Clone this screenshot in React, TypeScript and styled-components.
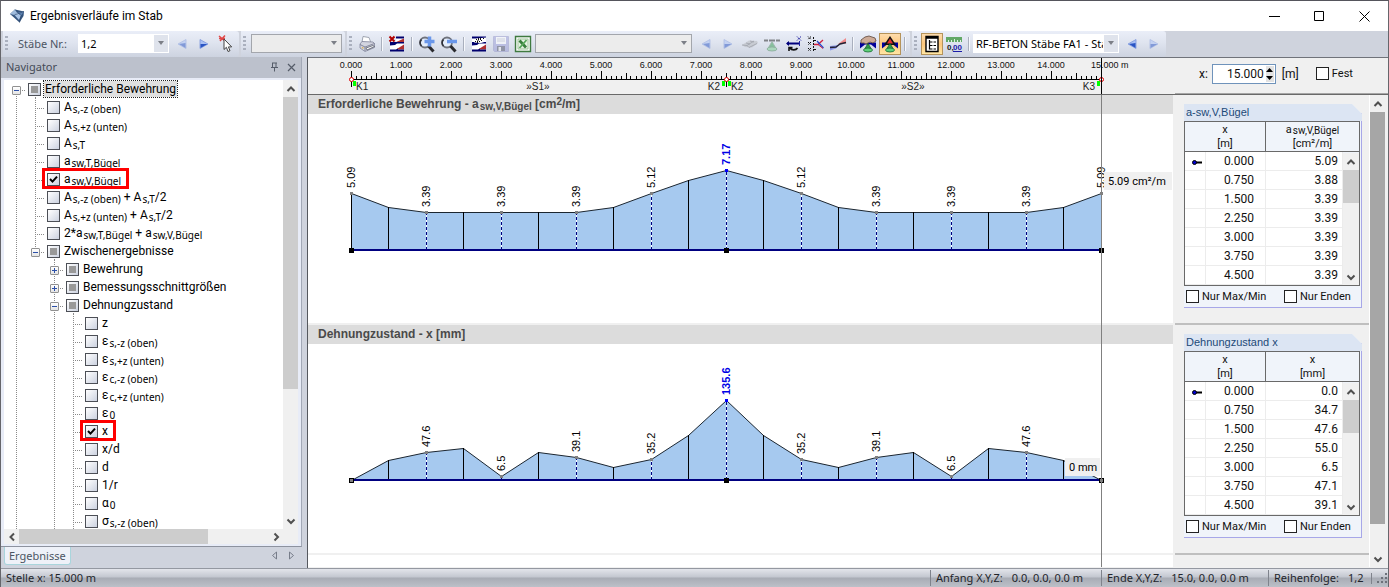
import React, { useLayoutEffect, useRef, useState } from "react";
import styled, { createGlobalStyle, css } from "styled-components";

const UI = `"Noto Sans", "Open Sans", sans-serif`;
const NARROW = `Roboto, "Noto Sans", sans-serif`;
const ARIAL = `"Liberation Sans", Arial, sans-serif`;

const tick =
  "url(\"data:image/svg+xml,%3Csvg xmlns='http://www.w3.org/2000/svg' width='11' height='11'%3E%3Cpath d='M2 5l2.5 2.6L9 2.6' fill='none' stroke='%23000' stroke-width='2'/%3E%3C/svg%3E\")";

const GlobalStyle = createGlobalStyle`
  *, *::before, *::after { box-sizing: border-box; }
  body { margin: 0; background: #f0f0f0; font: 11px/16px ${UI}; color: #111; }
  button, input, select { font: inherit; color: inherit; margin: 0; padding: 0; border: 0; border-radius: 0; background: none; }
  svg { display: block; flex: none; }
`;

/* ---------- window frame ---------- */

const Window = styled.div`
  display: flex;
  flex-direction: column;
  min-height: 100vh;
  border: 1px solid #66666b;
  border-top-color: #55555c;
  background: #cfd3dd;
`;

const TitleBar = styled.header`
  display: flex;
  align-items: center;
  height: 30px;
  padding: 0 1px 0 8px;
  background: #fff;
`;

const Title = styled.h1`
  flex: 1;
  margin: 0 0 0 5px;
  font: 400 12px/16px ${NARROW};
  color: #000;
`;

const CaptionButton = styled.button`
  display: flex;
  align-items: center;
  justify-content: center;
  width: 45px;
  height: 30px;
`;

/* ---------- toolbar ---------- */

const ToolBars = styled.div`
  display: flex;
  gap: 2px;
  height: 26px;
  padding-left: 2px;
  background: #cfd3dd;
`;

const ToolBar = styled.div<{ $end: number }>`
  display: flex;
  align-items: center;
  padding: 0 ${(p) => p.$end}px 1px 2px;
  border-radius: 0 3px 3px 0;
  background: linear-gradient(#eaeef8, #dfe4ef 45%, #cdd3e0);
`;

const Grip = styled.span`
  width: 3px;
  height: 15px;
  margin-right: 4px;
  background: repeating-linear-gradient(#aab0be 0 2px, transparent 2px 4px);
`;

const Separator = styled.span`
  width: 8px;
  height: 14px;
  background: linear-gradient(90deg, transparent 3px, #a9afbd 3px 4px, #f6f8fc 4px 5px, transparent 5px);
`;

const ToolButton = styled.button<{ $active?: boolean; $dim?: boolean }>`
  display: flex;
  align-items: center;
  justify-content: center;
  width: 22px;
  height: 22px;
  ${(p) =>
    p.$active &&
    css`
      border: 1px solid #b5935a;
      background: linear-gradient(#fddcae, #fdc77c 50%, #ffe6a4);
    `}
  svg {
    opacity: ${(p) => (p.$dim ? 0.5 : 1)};
  }
`;

const FieldLabel = styled.label`
  width: 66px;
  padding-left: 6px;
  white-space: nowrap;
  color: #4c5563;
`;

const ComboBox = styled.span<{ $w: number; $disabled?: boolean }>`
  position: relative;
  display: flex;
  width: ${(p) => p.$w}px;
  height: 19px;
  margin: ${(p) => (p.$disabled ? "0 3px 0 1px" : "0 2px 0 0")};
  border: 1px solid ${(p) => (p.$disabled ? "#a3a6ac" : "#fff")};
  background: ${(p) => (p.$disabled ? "#ececec" : "#fff")};
  &::after {
    content: "";
    position: absolute;
    inset: 0 0 0 auto;
    width: 14px;
    pointer-events: none;
    background: ${(p) => (p.$disabled ? "transparent" : "#dfe3ec")};
  }
  &::before {
    content: "";
    position: absolute;
    z-index: 1;
    right: 4px;
    top: 6px;
    border: 3px solid transparent;
    border-top: 4px solid #7c7f87;
    border-bottom: 0;
    pointer-events: none;
  }
`;

const Select = styled.select`
  flex: 1;
  min-width: 0;
  padding: 0 15px 0 2px;
  appearance: none;
  outline: 0;
  color: #000;
  opacity: 1;
`;

/* ---------- body ---------- */

const Body = styled.div`
  display: flex;
  flex: 1;
  gap: 5px;
`;

const Navigator = styled.aside`
  display: flex;
  flex-direction: column;
  width: 301px;
`;

const NavFrame = styled.div`
  display: flex;
  flex-direction: column;
  flex: 1;
  border-right: 1px solid #a2a8b6;
  border-bottom: 1px solid #8d929e;
  background: #e8ecf7;
`;

const NavHeader = styled.div`
  display: flex;
  align-items: center;
  height: 21px;
  padding: 0 1px 1px 5px;
  background: #bcc1cc;
  color: #444b57;
`;

const NavTitle = styled.h2`
  flex: 1;
  margin: 0;
  font-size: 11px;
  font-weight: 400;
`;

const PaneButton = styled.button`
  display: flex;
  align-items: center;
  justify-content: center;
  width: 17px;
  height: 17px;
`;

const NavContent = styled.div`
  display: grid;
  grid-template: 1fr 15px / 1fr 15px;
  flex: 1;
  margin: 2px 3px;
  background: #f0f0f0;
`;

const Tree = styled.ul`
  margin: 0;
  padding: 0 0 0 3px;
  list-style: none;
  background: #fff;
  color: #000;
`;

const TreeRow = styled.li`
  display: flex;
  height: 18px;
  &:last-child { height: 17px; overflow: hidden; }
`;

const dots = "repeating-linear-gradient(#8a8a8a 0 1px, transparent 1px 2px)";
const dotsX = "repeating-linear-gradient(90deg, #8a8a8a 0 1px, transparent 1px 2px)";

const Guide = styled.span<{ $line: "none" | "full" | "up" | "down"; $branch?: boolean }>`
  display: flex;
  align-items: center;
  justify-content: center;
  width: 19px;
  height: 18px;
  background:
    ${(p) => (p.$branch ? dotsX : "none")} 9px 10px / 10px 1px no-repeat,
    ${(p) => (p.$line === "none" ? "none" : dots)} 9px ${(p) => (p.$line === "down" ? "10px" : "0")} / 1px
      ${(p) => (p.$line === "full" ? "18px" : "9px")} no-repeat;
`;

const Expander = styled.button`
  width: 9px;
  height: 9px;
  margin: 2px 0 0;
  border: 1px solid #919191;
  border-radius: 1px;
  background: linear-gradient(#fff, #e4e4e4);
`;

const Node = styled.label<{ $marked?: boolean; $open?: boolean }>`
  position: relative;
  display: flex;
  align-items: center;
  gap: 3px;
  height: 18px;
  padding-left: 2px;
  white-space: nowrap;
  ${(p) =>
    p.$open &&
    css`
      background: ${dots} 9px 15px / 1px 3px no-repeat;
    `}
  ${(p) =>
    p.$marked &&
    css`
      &::after {
        content: "";
        position: absolute;
        inset: -2px -7px -1px -3px;
        border: 3px solid #f00;
      }
    `}
`;

const Check = styled.input<{ $mixed?: boolean; $plain?: boolean }>`
  flex: none;
  width: 13px;
  height: 13px;
  appearance: none;
  border: 1px solid ${(p) => (p.$plain ? "#222" : "#4c4f56")};
  background: ${(p) =>
    p.$mixed
      ? "linear-gradient(#999, #999) center / 7px 7px no-repeat, linear-gradient(135deg, #fff, #ccd2e0)"
      : p.$plain
        ? "#fff"
        : "linear-gradient(135deg, #fff, #ccd2e0)"};
  &:checked {
    background: ${tick} center no-repeat, linear-gradient(135deg, #fff, #ccd2e0);
  }
`;

const NodeText = styled.span<{ $focus?: boolean }>`
  height: 16px;
  padding: 0 1px;
  font: 12px/16px ${NARROW};
  ${(p) =>
    p.$focus &&
    css`
      background: #e0e0e0;
      outline: 1px dotted #222;
    `}
`;

const Sub = styled.span`
  margin-left: 1px;
  font-size: 10px;
  line-height: 1px;
  vertical-align: -2px;
`;

const TreeSub = styled(Sub)`
  font-family: ${UI};
`;

const HeadSub = styled(Sub)`
  vertical-align: -1px;
`;

const Sup = styled.span`
  font-size: 10px;
  line-height: 1px;
  vertical-align: 3px;
`;

const Scroll = styled.div<{ $row?: boolean }>`
  display: flex;
  flex-direction: ${(p) => (p.$row ? "row" : "column")};
  background: #f0f0f0;
`;

const ScrollButton = styled.button<{ $h?: number }>`
  display: flex;
  flex: none;
  align-items: center;
  justify-content: center;
  min-width: 15px;
  min-height: ${(p) => p.$h ?? 17}px;
`;

const Thumb = styled.div<{ $grow: number; $dark?: boolean }>`
  flex: ${(p) => p.$grow} 0 0;
  background: ${(p) => (p.$dark ? "#a6a6a6" : "#cdcdcd")};
`;

const Track = styled.div<{ $grow: number }>`
  flex: ${(p) => p.$grow} 0 0;
`;

const NavTabs = styled.div`
  display: flex;
  align-items: flex-start;
  height: 21px;
  padding: 0 2px 0 3px;
`;

const NavTab = styled.button`
  height: 18px;
  padding: 0 4px;
  border: 1px solid #a9d5dc;
  border-top: 0;
  border-radius: 0 0 3px 3px;
  background: #eef1f8;
  line-height: 16px;
  color: #4c5563;
`;

const Spacer = styled.span`
  flex: 1;
`;

/* ---------- result area ---------- */

const Main = styled.main`
  display: flex;
  flex-direction: column;
  flex: 1;
  min-width: 0;
  border-top: 1px solid #70737a;
  border-left: 1px solid #55585e;
  background: #f0f0f0;
`;

const RulerRow = styled.div`
  display: flex;
  height: 37px;
  border-bottom: 1px solid #696969;
`;

const Plot = styled.div`
  flex: 1;
  min-width: 0;
  overflow: hidden;
`;

const PositionBox = styled.div`
  display: flex;
  align-items: center;
  width: 213px;
  margin-left: 2px;
  padding: 0 0 4px 24px;
  border-bottom: 1px solid #a6a6a6;
  font: 12px/16px ${NARROW};
`;

const NumberField = styled.span`
  display: flex;
  width: 64px;
  height: 20px;
  margin: 0 6px 0 4px;
  border: 1px solid #6f93bb;
  background: #fff;
`;

const NumberInput = styled.input`
  flex: 1;
  min-width: 0;
  padding-right: 2px;
  outline: 0;
  text-align: right;
`;

const Spinner = styled.span`
  display: flex;
  flex-direction: column;
  width: 9px;
  padding: 1px 1px 1px 0;
`;

const SpinButton = styled.button`
  display: flex;
  flex: 1;
  align-items: center;
  justify-content: center;
  background: #e2e2e2;
`;

const Unit = styled.span`
  width: 34px;
`;

const CheckLabel = styled.label<{ $w?: number }>`
  display: flex;
  align-items: center;
  gap: 3px;
  width: ${(p) => (p.$w ? `${p.$w}px` : "auto")};
  font: 11px/16px ${NARROW};
  white-space: nowrap;
`;

const Results = styled.div`
  display: flex;
  flex: 1;
  padding-bottom: 1px;
`;

const Diagrams = styled.div`
  position: relative;
  display: flex;
  flex-direction: column;
  flex: 1;
  min-width: 0;
  background: #fff;
`;

const CursorLine = styled.div<{ $right: number }>`
  position: absolute;
  inset: 0 ${(p) => p.$right}px 0 auto;
  width: 1px;
  background: #808080;
`;

const Diagram = styled.section`
  height: 230px;
  border-bottom: 2px solid #f0f0f0;
`;

const DiagramTitle = styled.h3`
  height: 19px;
  margin: 0;
  padding-left: 10px;
  background: #dcdcdc;
  font: bold 12px/19px ${ARIAL};
  color: #4a4a4a;
`;

const Panels = styled.div`
  width: 197px;
  padding-left: 2px;
  border-right: 1px solid #fff;
`;

const PanelSlot = styled.section`
  height: 230px;
  padding: 9px 7px 0 9px;
  border-bottom: 2px solid #bfbfbf;
`;

const Card = styled.div`
  display: flex;
  flex-direction: column;
  height: 204px;
  border-right: 1px solid #a7a7e8;
  border-bottom: 1px solid #a7a7e8;
  background: #f0f4fa;
  clip-path: polygon(0 0, 168px 0, 100% 10px, 100% 100%, 0 100%);
`;

const CardTitle = styled.h4`
  height: 17px;
  margin: 0 -1px 0 0;
  padding-left: 2px;
  background: #dce5f3;
  font: 11px/17px ${ARIAL};
  color: #1d4a78;
`;

const TableFrame = styled.div`
  position: relative;
  width: 176px;
  height: 165px;
  border: 1px solid #696969;
`;

const Table = styled.table`
  width: 100%;
  border-collapse: separate;
  border-spacing: 0;
  table-layout: fixed;
`;

const HeadCell = styled.th<{ $first?: boolean }>`
  height: 30px;
  padding: 0;
  border-bottom: 1px solid #696969;
  border-right: ${(p) => (p.$first ? "1px solid #696969" : "0")};
  font: 400 11px/14px ${NARROW};
`;

const Cell = styled.td<{ $pad?: number }>`
  height: 19px;
  padding: 0 ${(p) => p.$pad ?? 0}px 0 0;
  border-right: 1px solid #ececec;
  border-bottom: 1px solid #ececec;
  background: #fff;
  text-align: right;
  font: 12px/18px ${NARROW};
  svg { margin: 2px 0 0 6px; }
`;

const TableScroll = styled(Scroll)`
  position: absolute;
  top: 31px;
  right: 0;
  bottom: 0;
  width: 16px;
`;

const CardChecks = styled.div`
  display: flex;
  flex: 1;
  align-items: center;
  padding-left: 2px;
`;

const PageScroll = styled(Scroll)`
  width: 15px;
  margin-right: 3px;
`;

/* ---------- status bar ---------- */

const StatusBar = styled.footer`
  display: flex;
  align-items: center;
  height: 19px;
  border-top: 1px solid #9498a1;
  background: linear-gradient(#e3e5eb, #c3c7d0 8px, #a8acb5 9px, #bcc0c8);
  color: #22252b;
`;

const StatusCell = styled.span<{ $w?: number }>`
  display: flex;
  gap: 9px;
  flex: ${(p) => (p.$w ? "none" : 1)};
  width: ${(p) => (p.$w ? `${p.$w}px` : "auto")};
  padding-left: 5px;
  white-space: nowrap;
  & + & {
    border-left: 1px solid #7f838c;
  }
`;

/* ---------- icons ---------- */

const ic = { width: 18, height: 18, viewBox: "0 0 18 18" };

const LogoIcon = () => (
  <svg width="16" height="16" viewBox="0 0 16 16">
    <path d="M1 6L6 1.5 15 3.5 14.5 8 10.5 14.5z" fill="#35557f" />
    <path d="M1 6L6 1.5 8 4.5 5.5 7z" fill="#9fbbdc" />
    <path d="M8 4.5L15 3.5 12 7.5z" fill="#5f84b4" />
    <path d="M5.500 7L8 4.500 12 7.500 10 12z" fill="#a9c4e6" />
    <path d="M6 1.500L12 7.500 10.500 14.500M15 3.500L5.500 7" stroke="#2b4468" strokeWidth=".6" fill="none" />
  </svg>
);

const Tri = ({ left }: { left?: boolean }) => (
  <svg width="12" height="12" viewBox="0 0 12 12">
    <path
      d={left ? "M10 1.500v9L2 6z" : "M2 1.500v9L10 6z"}
      fill="#a9c0f4"
      stroke="#7d98dc"
      strokeWidth=".8"
    />
    <path d={left ? "M9.500 5v5L3 6z" : "M2.500 6v4L9.500 6z"} fill="#2a55c4" />
  </svg>
);

const PickIcon = () => (
  <svg {...ic}>
    <path d="M2 1l6 5M8 .5L3 6M2 3.500h6" stroke="#e04848" strokeWidth="1.500" fill="none" />
    <path d="M7 4v10.500l2.400-2.200L11 16.500l2-.8-1.600-3.800h3.300z" fill="#fff" stroke="#444" />
  </svg>
);

const PrintIcon = () => (
  <svg {...ic}>
    <path d="M4 7L5 1.500l6 1L13 8z" fill="#fff" stroke="#8c92a0" strokeWidth=".8" />
    <path d="M2 9l2-2.500L15 7l1.500 1.500v4L7 16.500 2 13z" fill="#d3d5e0" stroke="#80849a" strokeWidth=".8" />
    <path d="M2 9.500L7 12l9.500-3.500M7 12v4" stroke="#70748a" strokeWidth=".8" fill="none" />
    <path d="M8 13l7-2.500 1.500 1L9 15z" fill="#fff" stroke="#565a68" strokeWidth=".8" />
    <path d="M4 12.500l1.500.8" stroke="#e0b040" strokeWidth="1.300" />
  </svg>
);

const Layers = ({ hatch, cross }: { hatch?: boolean; cross?: boolean }) => (
  <>
    <path d="M2 2h14v14H2z" fill="#fff" />
    <path d="M2 1.500h14v2H2z" fill="#00006e" />
    <path d="M16 3.500v4H7z" fill={hatch ? "#fff" : "#b03030"} />
    <path d="M2 7h14v1.500H9l-2 1.500-5 .5z" fill="#00006e" />
    <path d="M16 9.500v5H8z" fill="#b03030" />
    <path d="M2 14.500h6l2-1v1h6v2H2z" fill="#00006e" />
    {hatch && (
      <>
        <path d="M4 7.500l3-4 9-1v4l-5 1.500z" fill="#fff" />
        <path d="M5 6.500h3M9 6.500h2M6 4.500h3M10 4.500h2M7.500 5.500h2M11 5.500h2M8 3.500h3M13 3.500h2M7 7.500h2" stroke="#111" strokeDasharray="1 1" />
      </>
    )}
    {cross && (
      <>
        <path d="M0 0h8v7H0z" fill="#e3e7f1" />
        <path d="M1.500 1.500l5 5M6.500 1.500l-5 5" stroke="#b00000" strokeWidth="2" />
      </>
    )}
  </>
);

const ZoomIcon = ({ plus }: { plus?: boolean }) => (
  <svg {...ic}>
    <circle cx="7" cy="7.500" r="5" fill="#e4edfb" stroke="#70747e" strokeWidth="1.800" />
    <path d="M3.500 4.500a5 5 0 0 0 0 6.500" stroke="#2e3038" strokeWidth="1.500" fill="none" />
    <path d="M10.500 11l5 5.500" stroke="#2a2a2e" strokeWidth="3" />
    <path d={plus ? "M6.500 6.500h10M11.500 1.500v10" : "M7 6.500h10"} stroke="#6a97ea" strokeWidth="3.500" />
  </svg>
);

const SaveIcon = () => (
  <svg {...ic}>
    <path d="M1.500 1.500h15v15h-14l-1-1z" fill="#9a9dd8" stroke="#9496c8" />
    <path d="M4 2h10v7H4z" fill="#fff" />
    <path d="M5 4h8M5 6h8" stroke="#b7bac8" />
    <path d="M5 11h8v5H5z" fill="#4b4e66" />
    <path d="M6.500 12h2.500v4H6.500z" fill="#eee" />
  </svg>
);

const ExcelIcon = () => (
  <svg {...ic}>
    <path d="M1.500 1.500h15v15h-15z" fill="#f6faf5" stroke="#3f7a40" strokeWidth="1.400" />
    <path d="M4 4h10v10H4z" fill="#e6f2e4" stroke="#8fbb8c" strokeWidth=".8" />
    <path d="M5.500 5.500l6.500 7" stroke="#3a7f3e" strokeWidth="2.800" />
    <path d="M12.500 5l-7 8" stroke="#57a85a" strokeWidth="1.800" />
  </svg>
);

const MemberIcon = () => (
  <svg {...ic}>
    <path d="M1 10l7-4.500 8 .5 1 2-6 4.500-7-.5z" fill="#b4b6ba" />
    <path d="M1 10l5 .5L13 6M6 10.500l2 2 8-4M5 8l4 1M9 6l4 1" stroke="#63666c" strokeWidth=".8" fill="none" />
  </svg>
);

const SupportIcon = () => (
  <svg {...ic}>
    <path d="M1 5.500h4M13 5.500h4M6 5.500h6" stroke="#222" strokeWidth="2" />
    <path d="M9 6.500l3.500 6h-7z" fill="#33a050" stroke="#5e8a6b" strokeWidth=".8" />
    <ellipse cx="9" cy="14" rx="5" ry="2" fill="#7ed392" stroke="#3f7a4e" strokeWidth=".8" />
  </svg>
);

const DimensionIcon = () => (
  <svg {...ic}>
    <path d="M2 8.500h13" stroke="#00007c" strokeWidth="2" />
    <path d="M1 8.500l3-2.500v5z" fill="#00007c" />
    <path d="M12 1.500l4 4M16 1.500l-4 4" stroke="#2222a0" strokeDasharray="1.500 .6" />
    <path d="M14.500 6v5" stroke="#2222a0" />
    <path d="M5 13c1.500 2.500 6 2.500 7.500 0M4 16v-3.500h3.500" stroke="#111" strokeWidth="1.600" fill="none" />
  </svg>
);

const DivisionIcon = () => (
  <svg {...ic}>
    <path d="M1 1.500l3 3M4 1.500l-3 3M1 7l3 3M4 7l-3 3M1 13l3 3M4 13l-3 3" stroke="#111" strokeDasharray="1.500 .7" />
    <path d="M6.500 2v15M7 5.500h3M7 14.500h3" stroke="#111" strokeDasharray="2 1" />
    <path d="M7 9.500h4l5-4.500" stroke="#d02040" fill="none" strokeWidth="1.300" />
    <path d="M10 6l6.500 7" stroke="#2244cc" fill="none" strokeWidth="1.200" />
    <path d="M11 9.500l5 4" stroke="#d02040" fill="none" />
  </svg>
);

const SlopeIcon = () => (
  <svg {...ic}>
    <path d="M1 15.500V11l9-1-3 3.500z" fill="#8a96ea" />
    <path d="M9 9l8-6v5.500z" fill="#f08a8a" />
    <path d="M1 12.500l6-.500 4-3 6-1.500" stroke="#223" strokeWidth="1.400" fill="none" />
  </svg>
);

const MaxIcon = ({ hand }: { hand?: boolean }) => (
  <svg {...ic}>
    <path d="M1 7.500h16v6l-5-4H6l-5 4z" fill="#00009a" />
    {hand ? (
      <path d="M2 8V5l4-3 4-1 6 2 1 3-3 2-3-1-4 2-2-1z" fill="#cdab98" stroke="#6a5448" strokeWidth=".9" />
    ) : (
      <>
        <path d="M9 1L3 10h12z" fill="#111" />
        <path d="M9 3.500L6 8.500h6z" fill="#e83030" />
      </>
    )}
    <path d="M9 8.500l3 5H6z" fill="#2da04c" stroke="#1a5a2c" strokeWidth=".8" />
    <ellipse cx="9" cy="15" rx="4.500" ry="2" fill="#5fd07a" stroke="#1c6b33" strokeWidth=".8" />
  </svg>
);

const TreeIcon = () => (
  <svg {...ic}>
    <path d="M3 1.500h12v15H3z" fill="#fff" stroke="#000" strokeWidth="1.400" />
    <path d="M3 2.500h12" stroke="#000" strokeWidth="2.500" />
    <path d="M6.500 5v9.500M6.500 7h3M6.500 10.500h3M6.500 14h3M10.500 7h2.500M10.500 10.500h2.500M10.500 14h2.500" stroke="#000" strokeWidth="1.200" />
  </svg>
);

const DecimalIcon = () => (
  <svg {...ic}>
    <path d="M1 2h16v5H1z" fill="#62a866" />
    <path d="M3.500 7V5M6.500 7V5M9.500 7V4M12.500 7V5M15.500 7V5" stroke="#dff2e0" />
    <text x="2" y="15" fontSize="8" fontWeight="700" fontFamily="Liberation Sans" fill="#222">0,</text>
    <text x="8" y="15" fontSize="8" fontWeight="700" fontFamily="Liberation Sans" fill="#1c1ca8">00</text>
    <path d="M8 16.500h9" stroke="#1c1ca8" />
  </svg>
);

const Chevron = ({ dir }: { dir: "up" | "down" | "left" | "right" }) => {
  const d = {
    up: "M1.500 7L5 3.500 8.500 7",
    down: "M1.500 3.500L5 7 8.500 3.500",
    left: "M7 1.500L3.500 5 7 8.500",
    right: "M3.500 1.500L7 5 3.500 8.500",
  }[dir];
  return (
    <svg width="10" height="10" viewBox="0 0 10 10">
      <path d={d} fill="none" stroke="#505050" strokeWidth="2" />
    </svg>
  );
};

/* ---------- navigator data ---------- */

type Item = {
  label: React.ReactNode;
  level: number;
  kind?: "mixed" | "checked";
  fold?: "+" | "-";
  marked?: boolean;
  focus?: boolean;
};

const q = (base: string, sub: string) => (
  <>
    {base}
    <TreeSub>{sub}</TreeSub>
  </>
);

const items: Item[] = [
  { level: 0, label: "Erforderliche Bewehrung", kind: "mixed", fold: "-", focus: true },
  { level: 1, label: q("A", "s,-z (oben)") },
  { level: 1, label: q("A", "s,+z (unten)") },
  { level: 1, label: q("A", "s,T") },
  { level: 1, label: q("a", "sw,T,Bügel") },
  { level: 1, label: q("a", "sw,V,Bügel"), kind: "checked", marked: true },
  { level: 1, label: <>{q("A", "s,-z (oben)")} + {q("A", "s,T")}/2</> },
  { level: 1, label: <>{q("A", "s,+z (unten)")} + {q("A", "s,T")}/2</> },
  { level: 1, label: <>{q("2*a", "sw,T,Bügel")} + {q("a", "sw,V,Bügel")}</> },
  { level: 1, label: "Zwischenergebnisse", kind: "mixed", fold: "-" },
  { level: 2, label: "Bewehrung", kind: "mixed", fold: "+" },
  { level: 2, label: "Bemessungsschnittgrößen", kind: "mixed", fold: "+" },
  { level: 2, label: "Dehnungzustand", kind: "mixed", fold: "-" },
  { level: 3, label: "z" },
  { level: 3, label: q("ε", "s,-z (oben)") },
  { level: 3, label: q("ε", "s,+z (unten)") },
  { level: 3, label: q("ε", "c,-z (oben)") },
  { level: 3, label: q("ε", "c,+z (unten)") },
  { level: 3, label: q("ε", "0") },
  { level: 3, label: "x", kind: "checked", marked: true },
  { level: 3, label: "x/d" },
  { level: 3, label: "d" },
  { level: 3, label: "1/r" },
  { level: 3, label: q("α", "0") },
  { level: 3, label: q("σ", "s,-z (oben)") },
];

const guideLine = (item: Item, cell: number) => {
  if (item.level === 0) return "down" as const;
  if (cell === 1 && item.level > 1) return "none" as const;
  if (cell === 1 && item.fold) return "up" as const;
  return "full" as const;
};

const TreeItem = ({ item }: { item: Item }) => (
  <TreeRow>
    {Array.from({ length: item.level + 1 }, (_, cell) => {
      const own = cell === item.level;
      return (
        <Guide key={cell} $line={guideLine(item, cell)} $branch={own}>
          {own && item.fold && (
            <Expander aria-label={item.fold === "+" ? "Aufklappen" : "Zuklappen"}>
              <svg width="7" height="7" viewBox="0 0 7 7">
                <path d={item.fold === "+" ? "M1 3.500h5M3.500 1v5" : "M1 3.500h5"} stroke="#2b4fa8" />
              </svg>
            </Expander>
          )}
        </Guide>
      );
    })}
    <Node $marked={item.marked} $open={item.fold === "-"}>
      <Check type="checkbox" defaultChecked={item.kind === "checked"} $mixed={item.kind === "mixed"} />
      <NodeText $focus={item.focus}>{item.label}</NodeText>
    </Node>
  </TreeRow>
);

/* ---------- diagrams ---------- */

const LEFT = 43;
const RIGHT = 72;
const LENGTH = 15;

function useWidth() {
  const ref = useRef<HTMLDivElement>(null);
  const [width, setWidth] = useState(865);
  useLayoutEffect(() => {
    const el = ref.current;
    if (!el) return;
    const update = () => setWidth(Math.max(200, el.clientWidth));
    update();
    const observer = new ResizeObserver(update);
    observer.observe(el);
    return () => observer.disconnect();
  }, []);
  const at = (m: number) => Math.floor(LEFT + (m / LENGTH) * (width - LEFT - RIGHT));
  return { ref, width, at };
}

const Ruler = () => {
  const { ref, width, at } = useWidth();
  const scale = { fontFamily: "Liberation Sans", fontSize: 9, fill: "#111" };
  const text = { fontFamily: "Liberation Sans", fontSize: 10, fill: "#222" };
  const nodes = [0, 7.5, 15];
  return (
    <Plot ref={ref}>
      <svg width={width} height="36">
        {Array.from({ length: 151 }, (_, i) => {
          const h = i % 10 === 0 ? 8 : i % 5 === 0 ? 6 : 3;
          return <rect key={i} x={at(i / 10)} y={21 - h} width="1" height={h} fill="#000" />;
        })}
        <rect x={at(0)} y="21" width={at(15) - at(0)} height="1" fill="#000" />
        {Array.from({ length: 15 }, (_, i) => (
          <text key={i} x={at(i)} y="10" textAnchor="middle" {...scale}>
            {i}.000
          </text>
        ))}
        <text x={at(15) - 10} y="10" {...scale}>15.000 m</text>
        {nodes.map((n) => (
          <g key={n}>
            {n > 0 && <rect x={at(n) - 4} y="23" width="3" height="5" fill="#0f0" />}
            {n < 15 && <rect x={at(n) + 2} y="23" width="3" height="5" fill="#0f0" />}
            <rect x={at(n)} y="23" width="1" height="6" fill="#000" />
            <circle cx={at(n) + 0.5} cy="21.500" r="2" fill="#fff" stroke="#e00000" />
          </g>
        ))}
        <rect x={at(15)} y="0" width="1" height="36" fill="#000" />
        <text x={at(0) + 5} y="32" {...text}>K1</text>
        <text x={at(7.5) - 6} y="32" textAnchor="end" {...text}>K2</text>
        <text x={at(7.5) + 5} y="32" {...text}>K2</text>
        <text x={at(15) - 6} y="32" textAnchor="end" {...text}>K3</text>
        <text x={at(3.75)} y="32" textAnchor="middle" {...text}>»S1»</text>
        <text x={at(11.25)} y="32" textAnchor="middle" {...text}>»S2»</text>
      </svg>
    </Plot>
  );
};

type Series = {
  half: number[];
  digits: number;
  endFill: string;
  tip: React.ReactNode;
  tipBox: { dx: number; y: number; w: number };
};

const BASE = 136;
const PEAK = 80;

const Curve = ({ series }: { series: Series }) => {
  const { ref, width, at } = useWidth();
  const values = [...series.half, ...series.half.slice(0, -1).reverse()];
  const max = Math.max(...values);
  const pts = values.map((v, i) => ({ v, x: at(i * 0.75), y: Math.round(BASE - (v / max) * PEAK) }));
  const outline = pts.map((p) => `${p.x + 0.5},${p.y + 0.5}`).join(" ");
  const start = at(0);
  const end = at(15);
  const { tipBox } = series;
  return (
    <Plot ref={ref}>
      <svg width={width} height="209">
        <polygon points={`${start},${BASE} ${outline} ${end},${BASE}`} fill="#a6c9ef" />
        <polyline points={outline} fill="none" stroke="#1c2630" strokeWidth="1" />
        {pts.map((p, i) =>
          i % 2 || i === 0 ? (
            <rect key={i} x={p.x} y={p.y} width="1" height={BASE - p.y} fill="#000" />
          ) : (
            <g key={i}>
              <rect x={p.x} y={p.y} width="1" height={BASE - p.y} fill="#fff" />
              <path d={`M${p.x + 0.5} ${BASE}V${p.y}`} stroke="#00007f" strokeDasharray="3 2" />
            </g>
          ),
        )}
        <rect x={start} y={BASE - 1} width={end - start} height="2" fill="#000080" />
        {pts.map((p, i) => {
          if (i % 2 || p.v === 0) return null;
          const peak = p.v === max;
          return (
            <g key={i}>
              <rect x={p.x - 1} y={p.y - 1} width="3" height="3" fill={peak ? "#0000ff" : "#808080"} />
              <text
                transform={`translate(${p.x + 4} ${p.y - 5}) rotate(-90)`}
                fontFamily="Liberation Sans"
                fontSize="11"
                fontWeight={peak ? 700 : 400}
                fill={peak ? "#0000e6" : "#000"}
              >
                {p.v.toFixed(series.digits)}
              </text>
            </g>
          );
        })}
        {[start, at(7.5), end].map((x, i) => (
          <rect key={i} x={x - 1.5} y={BASE - 1.5} width="4" height="4" fill={i === 1 ? "#000" : series.endFill} stroke="#000" />
        ))}
        <rect x={end + tipBox.dx} y={tipBox.y} width={tipBox.w} height="18" fill="#f0f0f0" />
        <text x={end + tipBox.dx + 4} y={tipBox.y + 13} fontFamily="Roboto" fontSize="11" fill="#000">
          {series.tip}
        </text>
      </svg>
    </Plot>
  );
};

const asw: Series = {
  half: [5.09, 3.88, 3.39, 3.39, 3.39, 3.39, 3.39, 3.88, 5.12, 6.25, 7.17],
  digits: 2,
  endFill: "#000",
  tip: "5.09 cm²/m",
  tipBox: { dx: 3, y: 58, w: 68 },
};

const depth: Series = {
  half: [0, 34.7, 47.6, 55.0, 6.5, 47.1, 39.1, 22, 35.2, 76, 135.6],
  digits: 1,
  endFill: "#808080",
  tip: "0 mm",
  tipBox: { dx: -36, y: 114, w: 35 },
};

/* ---------- value tables ---------- */

const PointerIcon = () => (
  <svg width="12" height="7" viewBox="0 0 12 7">
    <path d="M4 3.500h7" stroke="#000" strokeWidth="2" />
    <circle cx="3.500" cy="3.500" r="2" fill="#0000d0" stroke="#000" />
  </svg>
);

const ValueCard = ({ title, head, unit, values, id }: {
  title: string;
  head: React.ReactNode;
  unit: React.ReactNode;
  values: string[];
  id: string;
}) => (
  <PanelSlot>
    <Card>
      <CardTitle>{title}</CardTitle>
      <TableFrame>
        <Table>
          <colgroup>
            <col width="21" />
            <col width="60" />
            <col width="77" />
            <col width="16" />
          </colgroup>
          <thead>
            <tr>
              <HeadCell $first colSpan={2}>x<br />[m]</HeadCell>
              <HeadCell colSpan={2}>{head}<br />{unit}</HeadCell>
            </tr>
          </thead>
          <tbody>
            {values.map((v, i) => (
              <tr key={i}>
                <Cell>{i === 0 && <PointerIcon />}</Cell>
                <Cell $pad={11}>{(i * 0.75).toFixed(3)}</Cell>
                <Cell $pad={4}>{v}</Cell>
              </tr>
            ))}
          </tbody>
        </Table>
        <TableScroll>
          <ScrollButton aria-label="Nach oben"><Chevron dir="up" /></ScrollButton>
          <Thumb $grow={33} />
          <Track $grow={66} />
          <ScrollButton aria-label="Nach unten"><Chevron dir="down" /></ScrollButton>
        </TableScroll>
      </TableFrame>
      <CardChecks>
        <CheckLabel $w={98}><Check $plain type="checkbox" name={`${id}-max`} />Nur Max/Min</CheckLabel>
        <CheckLabel><Check $plain type="checkbox" name={`${id}-ends`} />Nur Enden</CheckLabel>
      </CardChecks>
    </Card>
  </PanelSlot>
);

const Combo = ({ w, value, label, id, disabled }: { w: number; value?: string; label: string; id?: string; disabled?: boolean }) => (
  <ComboBox $w={w} $disabled={disabled}>
    <Select id={id} aria-label={label} disabled={disabled}>
      <option>{value ?? ""}</option>
    </Select>
  </ComboBox>
);

export default function App() {
  return (
    <>
      <GlobalStyle />
      <Window>
        <TitleBar>
          <LogoIcon />
          <Title>Ergebnisverläufe im Stab</Title>
          <CaptionButton aria-label="Minimieren">
            <svg width="11" height="11"><path d="M0 5.500h11" stroke="#000" /></svg>
          </CaptionButton>
          <CaptionButton aria-label="Maximieren">
            <svg width="11" height="11"><path d="M.5.500h9v9h-9z" fill="none" stroke="#000" /></svg>
          </CaptionButton>
          <CaptionButton aria-label="Schließen">
            <svg width="11" height="11"><path d="M.5.500l10 10M10.500.500l-10 10" stroke="#000" /></svg>
          </CaptionButton>
        </TitleBar>

        <ToolBars>
          <ToolBar $end={2}>
            <Grip />
            <FieldLabel htmlFor="member">Stäbe Nr.:</FieldLabel>
            <Combo id="member" w={91} value="1,2" label="Stäbe Nr." />
            <ToolButton $dim aria-label="Voriger Stab"><Tri left /></ToolButton>
            <ToolButton aria-label="Nächster Stab"><Tri /></ToolButton>
            <ToolButton aria-label="Stab wählen"><PickIcon /></ToolButton>
          </ToolBar>
          <ToolBar $end={0}>
            <Grip />
            <Combo w={91} label="Lastfall" disabled />
          </ToolBar>
          <ToolBar $end={1}>
            <Grip />
            <ToolButton aria-label="Drucken"><PrintIcon /></ToolButton>
            <Separator />
            <ToolButton aria-label="Verläufe löschen"><svg {...ic}><Layers cross /></svg></ToolButton>
            <Separator />
            <ToolButton aria-label="Vergrößern"><ZoomIcon plus /></ToolButton>
            <ToolButton aria-label="Verkleinern"><ZoomIcon /></ToolButton>
            <Separator />
            <ToolButton aria-label="Füllung"><svg {...ic}><Layers hatch /></svg></ToolButton>
            <ToolButton $dim aria-label="Speichern"><SaveIcon /></ToolButton>
            <ToolButton aria-label="Excel"><ExcelIcon /></ToolButton>
            <Combo w={157} label="Darstellung" disabled />
            <ToolButton $dim aria-label="Zurück"><Tri left /></ToolButton>
            <ToolButton $dim aria-label="Vor"><Tri /></ToolButton>
            <ToolButton $dim aria-label="Stäbe"><MemberIcon /></ToolButton>
            <ToolButton $dim aria-label="Lager"><SupportIcon /></ToolButton>
            <ToolButton aria-label="Bemaßung"><DimensionIcon /></ToolButton>
            <ToolButton aria-label="Teilung"><DivisionIcon /></ToolButton>
            <ToolButton aria-label="Verlauf glätten"><SlopeIcon /></ToolButton>
            <Separator />
            <ToolButton aria-label="Manuell"><MaxIcon hand /></ToolButton>
            <ToolButton $active aria-label="Extremwerte"><MaxIcon /></ToolButton>
            <Separator />
          </ToolBar>
          <ToolBar $end={1}>
            <Grip />
            <ToolButton $active aria-label="Navigator"><TreeIcon /></ToolButton>
            <ToolButton aria-label="Dezimalstellen"><DecimalIcon /></ToolButton>
            <Separator />
            <Combo w={146} value="RF-BETON Stäbe FA1 - Stahlbeton" label="Bemessungsfall" />
            <ToolButton aria-label="Voriger Fall"><Tri left /></ToolButton>
            <ToolButton $dim aria-label="Nächster Fall"><Tri /></ToolButton>
          </ToolBar>
        </ToolBars>

        <Body>
          <Navigator>
            <NavFrame>
              <NavHeader>
                <NavTitle>Navigator</NavTitle>
                <PaneButton aria-label="Anheften">
                  <svg width="9" height="10"><path d="M2.500 1v4.500M6 1v4.500M2 1h5M1 5.500h7M4.500 6v3.500" stroke="#555c69" fill="none" /></svg>
                </PaneButton>
                <PaneButton aria-label="Schließen">
                  <svg width="9" height="9"><path d="M1 1l7 7M8 1L1 8" stroke="#555c69" strokeWidth="1.200" /></svg>
                </PaneButton>
              </NavHeader>
              <NavContent>
                <Tree>
                  {items.map((item, i) => (
                    <TreeItem key={i} item={item} />
                  ))}
                </Tree>
                <Scroll>
                  <ScrollButton aria-label="Nach oben"><Chevron dir="up" /></ScrollButton>
                  <Thumb $grow={292} />
                  <Track $grow={123} />
                  <ScrollButton aria-label="Nach unten"><Chevron dir="down" /></ScrollButton>
                </Scroll>
                <Scroll $row>
                  <ScrollButton $h={15} aria-label="Nach links"><Chevron dir="left" /></ScrollButton>
                  <Thumb $grow={187} />
                  <Track $grow={59} />
                  <ScrollButton $h={15} aria-label="Nach rechts"><Chevron dir="right" /></ScrollButton>
                </Scroll>
              </NavContent>
            </NavFrame>
            <NavTabs>
              <NavTab>Ergebnisse</NavTab>
              <Spacer />
              <PaneButton aria-label="Vorige Registerkarte">
                <svg width="7" height="9"><path d="M5.500 1v7L1.500 4.500z" fill="none" stroke="#777d8a" /></svg>
              </PaneButton>
              <PaneButton aria-label="Nächste Registerkarte">
                <svg width="7" height="9"><path d="M1.500 1v7l4-3.500z" fill="none" stroke="#777d8a" /></svg>
              </PaneButton>
            </NavTabs>
          </Navigator>

          <Main>
            <RulerRow>
              <Ruler />
              <PositionBox>
                <label htmlFor="position">x:</label>
                <NumberField>
                  <NumberInput id="position" defaultValue="15.000" />
                  <Spinner>
                    <SpinButton aria-label="Mehr"><svg width="7" height="4"><path d="M0 4L3.500 0 7 4z" /></svg></SpinButton>
                    <SpinButton aria-label="Weniger"><svg width="7" height="4"><path d="M0 0L3.500 4 7 0z" /></svg></SpinButton>
                  </Spinner>
                </NumberField>
                <Unit>[m]</Unit>
                <CheckLabel><Check $plain type="checkbox" />Fest</CheckLabel>
              </PositionBox>
            </RulerRow>
            <Results>
              <Diagrams>
                <Diagram>
                  <DiagramTitle>Erforderliche Bewehrung - a<Sub>sw,V,Bügel</Sub> [cm<Sup>2</Sup>/m]</DiagramTitle>
                  <Curve series={asw} />
                </Diagram>
                <Diagram>
                  <DiagramTitle>Dehnungzustand - x [mm]</DiagramTitle>
                  <Curve series={depth} />
                </Diagram>
                <CursorLine $right={RIGHT - 1} />
              </Diagrams>
              <Panels>
                <ValueCard
                  id="asw"
                  title="a-sw,V,Bügel"
                  head={<>a<HeadSub>sw,V,Bügel</HeadSub></>}
                  unit="[cm²/m]"
                  values={["5.09", "3.88", "3.39", "3.39", "3.39", "3.39", "3.39"]}
                />
                <ValueCard
                  id="depth"
                  title="Dehnungzustand x"
                  head="x"
                  unit="[mm]"
                  values={["0.0", "34.7", "47.6", "55.0", "6.5", "47.1", "39.1"]}
                />
              </Panels>
              <PageScroll>
                <ScrollButton aria-label="Nach oben"><Chevron dir="up" /></ScrollButton>
                <Thumb $grow={411} $dark />
                <Track $grow={26} />
                <ScrollButton aria-label="Nach unten"><Chevron dir="down" /></ScrollButton>
              </PageScroll>
            </Results>
          </Main>
        </Body>

        <StatusBar>
          <StatusCell>Stelle x: 15.000 m</StatusCell>
          <StatusCell $w={171}><span>Anfang X,Y,Z:</span><span>0.0, 0.0, 0.0 m</span></StatusCell>
          <StatusCell $w={167}><span>Ende X,Y,Z:</span><span>15.0, 0.0, 0.0 m</span></StatusCell>
          <StatusCell $w={103}><span>Reihenfolge:</span><span>1,2</span></StatusCell>
          <StatusCell $w={17}>
            <svg width="11" height="11">
              <path d="M8 0h2v2H8zM8 4h2v2H8zM8 8h2v2H8zM4 4h2v2H4zM4 8h2v2H4zM0 8h2v2H0z" fill="#6d717a" />
            </svg>
          </StatusCell>
        </StatusBar>
      </Window>
    </>
  );
}
